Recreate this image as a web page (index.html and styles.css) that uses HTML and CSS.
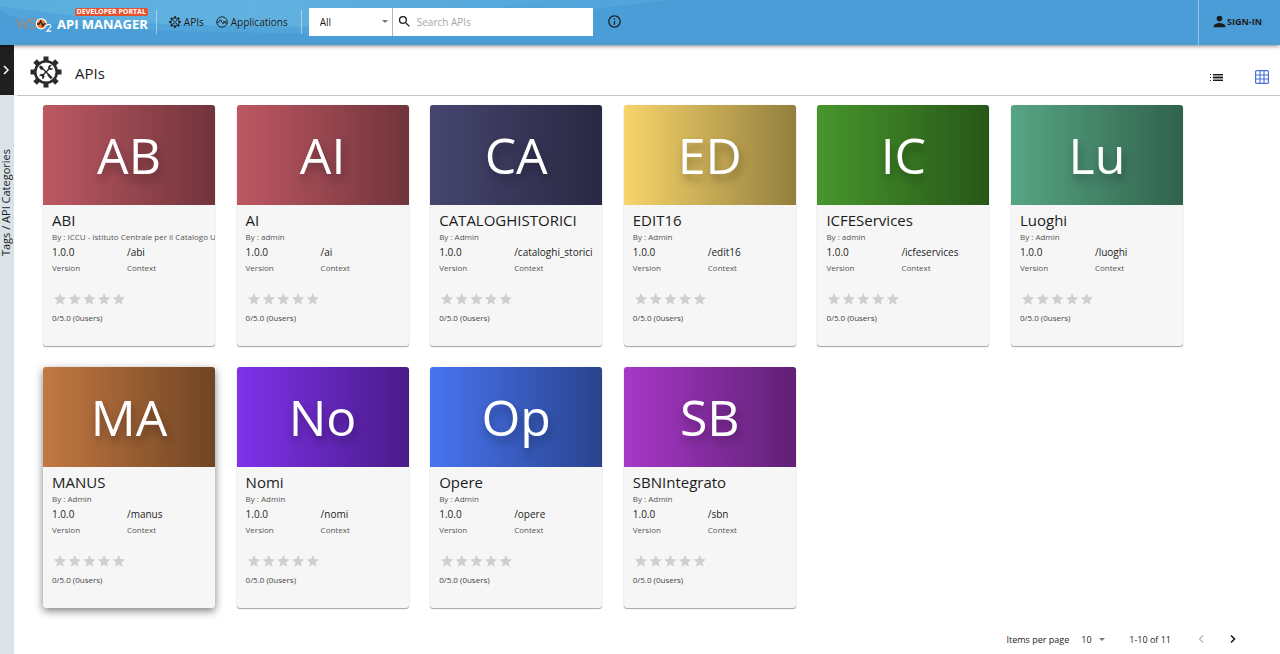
FILE: index.html
```html
<!DOCTYPE html>
<html lang="en">
<head>
<meta charset="utf-8">
<meta name="viewport" content="width=device-width, initial-scale=1">
<title>APIs - Developer Portal</title>
<link rel="stylesheet" href="styles.css">
</head>
<body>
<svg class="defs" aria-hidden="true">
  <symbol id="gear" viewBox="0 0 32 32">
    <g fill="currentColor">
      <g id="teeth">
        <rect x="13.5" y="0.5" width="5" height="5"/><rect x="13.5" y="26.5" width="5" height="5"/>
        <rect x="0.5" y="13.5" width="5" height="5"/><rect x="26.5" y="13.5" width="5" height="5"/>
      </g>
      <use href="#teeth" transform="rotate(45 16 16)"/>
    </g>
    <circle cx="16" cy="16" r="10.8" fill="none" stroke="currentColor" stroke-width="2.6"/>
    <path d="M12 12l8.300 8.300M20 12l-8 8" stroke="currentColor" stroke-width="1.400" fill="none"/>
    <path d="M10.300 9.600l2.400 1 .7 2.300-1.100 1-2.200-.8-1-2.300zM18.700 17.800l4 3.600-1.900 1.900-3.600-4z" fill="currentColor"/>
    <path d="M21.900 9.300a2.500 2.500 0 1 0 1.200 2.700l-2 .4-1.200-1.200z" fill="currentColor"/>
    <path d="M9.300 20.200a2.600 2.600 0 1 1 2.700 2.700l.2-2-1-1.100z" fill="currentColor"/>
  </symbol>
  <symbol id="stars" viewBox="0 0 73 14">
    <path id="star" fill="#cfcfcf" d="M7 1l1.800 4.100 4.300.4-3.300 2.900 1 4.300L7 10.400l-3.800 2.300 1-4.300L.9 5.500l4.300-.4z"/>
    <use href="#star" x="14.700"/><use href="#star" x="29.400"/><use href="#star" x="44.100"/><use href="#star" x="58.800"/>
  </symbol>
</svg>

<header class="topbar">
  <svg class="waves" viewBox="0 0 700 45" preserveAspectRatio="none" aria-hidden="true">
    <defs>
      <linearGradient id="sky" x1="0" x2="1" y1="0" y2="0"><stop offset="0" stop-color="#5aaddd"/><stop offset=".45" stop-color="#61b2e0"/><stop offset="1" stop-color="#55a6da"/></linearGradient>
    </defs>
    <path fill="#52a5da" d="M0 0H665Q600 8 550 14T400 30Q300 36 150 30T0 8z"/>
    <path fill="url(#sky)" d="M0 0H560Q460 12 390 20T270 26Q150 26 90 18T0 6z"/>
  </svg>
  <a class="brand" href="#" aria-label="WSO2 API Manager developer portal">
    <svg class="brand-mark" viewBox="0 0 37 18" aria-hidden="true">
      <path d="M.6 3.500l3.200 9.800L7 4.500l3.200 8.800 3.100-9.800M20.500 4.800q-2-1.400-4-.9-2.200.8-1.700 2.600.5 1.400 3 2 2.700.9 2.400 2.900-.6 2-3 1.900-1.600 0-3-1" fill="none" stroke="#a98b72" stroke-width="1.200"/>
      <circle cx="25.300" cy="8.800" r="5" fill="#ef7b32" stroke="#fff" stroke-width="1.200"/>
      <path d="M21 9h2.200l1.600-3 2 5 1.300-2.200h2" fill="none" stroke="#2a2220" stroke-width="1.300"/>
      <path d="M30.700 11q.4-1.800 2.200-1.800 2 .1 2 1.900 0 1.200-4 5h4.500" fill="none" stroke="#fff" stroke-width="1.100"/>
    </svg>
    <span class="brand-text"><span class="portal">DEVELOPER PORTAL</span><span class="product">API MANAGER</span></span>
  </a>
  <nav class="nav">
    <a href="#"><svg class="nav-icon" aria-hidden="true"><use href="#gear"/></svg>APIs</a>
    <a href="#"><svg class="nav-icon" viewBox="0 0 24 24" fill="none" stroke="currentColor" stroke-width="1.800" aria-hidden="true"><circle cx="12" cy="12" r="10.500"/><path d="M1.500 13h2.800q1.500 0 2.300-2.600Q8 6 9.400 8l4.100 7q1.200 1.500 2-.7l1-2q.9-1.200 1.500.7t2 1h2.500M14 11.500l6 0"/></svg>Applications</a>
  </nav>
  <form class="search">
    <select class="scope" aria-label="Search scope"><option>All</option></select>
    <label class="search-box">
      <svg class="search-icon" viewBox="0 0 24 24" aria-hidden="true"><path fill="currentColor" d="M15.500 14h-.79l-.28-.27A6.471 6.471 0 0 0 16 9.500 6.500 6.500 0 1 0 9.500 16c1.610 0 3.090-.59 4.230-1.570l.27.280v.79l5 4.990L20.490 19l-4.990-5zm-6 0C7.010 14 5 11.990 5 9.500S7.010 5 9.500 5 14 7.010 14 9.500 11.990 14 9.500 14z"/></svg>
      <input type="search" placeholder="Search APIs" aria-label="Search APIs">
    </label>
  </form>
  <button class="icon-button" type="button" aria-label="Search help"><svg class="info" viewBox="0 0 24 24" aria-hidden="true"><path fill="currentColor" d="M11 17h2v-6h-2v6zm1-15C6.480 2 2 6.480 2 12s4.480 10 10 10 10-4.480 10-10S17.520 2 12 2zm0 18c-4.410 0-8-3.590-8-8s3.590-8 8-8 8 3.590 8 8-3.590 8-8 8zM11 9h2V7h-2v2z"/></svg></button>
  <a class="sign-in" href="#"><svg class="person" viewBox="3 3 18 18" aria-hidden="true"><path fill="currentColor" d="M12 12c2.210 0 4-1.790 4-4s-1.790-4-4-4-4 1.790-4 4 1.790 4 4 4zm0 2c-2.670 0-8 1.340-8 4v2h16v-2c0-2.660-5.330-4-8-4z"/></svg>SIGN-IN</a>
</header>

<div class="layout">
  <aside class="rail">
    <button class="rail-toggle" type="button" aria-label="Expand tags"><svg class="chevron" viewBox="0 0 8 12" aria-hidden="true"><path d="M2 2l4 4-4 4" fill="none" stroke="currentColor" stroke-width="1.500"/></svg></button>
    <span class="rail-label">Tags / API Categories</span>
  </aside>
  <main class="content">
    <div class="heading">
      <svg class="heading-icon" aria-hidden="true"><use href="#gear"/></svg>
      <h1>APIs</h1>
      <div class="views">
        <button class="icon-button" type="button" aria-label="List view"><svg class="list-icon" viewBox="0 0 13 9" aria-hidden="true"><path fill="#999" d="M3 1h10v7H3z"/><path fill="currentColor" d="M0 1h1v1H0zM0 4h1v1H0zM0 7h1v1H0zM3 1h10v1H3zM3 4h10v1H3zM3 7h10v1H3z"/></svg></button>
        <button class="icon-button active" type="button" aria-label="Grid view"><svg class="grid-icon" viewBox="0 0 14 14" fill="none" stroke="currentColor" stroke-width="1.200" aria-hidden="true"><rect x=".6" y=".6" width="12.800" height="12.800" rx="1"/><path d="M5 .6v12.800M9 .6v12.800M.6 5h12.800M.6 9h12.800"/></svg></button>
      </div>
    </div>

    <div class="cards">
      <article class="card"><a class="thumb rose" href="#">AB</a><div class="body"><h2>ABI</h2><p class="by">By : ICCU - Istituto Centrale per il Catalogo Unico</p><dl><div><dd>1.0.0</dd><dt>Version</dt></div><div><dd>/abi</dd><dt>Context</dt></div></dl><svg class="stars" aria-hidden="true"><use href="#stars"/></svg><p class="score">0/5.0 (0users)</p></div></article>
      <article class="card"><a class="thumb rose" href="#">AI</a><div class="body"><h2>AI</h2><p class="by">By : admin</p><dl><div><dd>1.0.0</dd><dt>Version</dt></div><div><dd>/ai</dd><dt>Context</dt></div></dl><svg class="stars" aria-hidden="true"><use href="#stars"/></svg><p class="score">0/5.0 (0users)</p></div></article>
      <article class="card"><a class="thumb navy" href="#">CA</a><div class="body"><h2>CATALOGHISTORICI</h2><p class="by">By : Admin</p><dl><div><dd>1.0.0</dd><dt>Version</dt></div><div><dd>/cataloghi_storici</dd><dt>Context</dt></div></dl><svg class="stars" aria-hidden="true"><use href="#stars"/></svg><p class="score">0/5.0 (0users)</p></div></article>
      <article class="card"><a class="thumb gold" href="#">ED</a><div class="body"><h2>EDIT16</h2><p class="by">By : Admin</p><dl><div><dd>1.0.0</dd><dt>Version</dt></div><div><dd>/edit16</dd><dt>Context</dt></div></dl><svg class="stars" aria-hidden="true"><use href="#stars"/></svg><p class="score">0/5.0 (0users)</p></div></article>
      <article class="card"><a class="thumb green" href="#">IC</a><div class="body"><h2>ICFEServices</h2><p class="by">By : admin</p><dl><div><dd>1.0.0</dd><dt>Version</dt></div><div><dd>/icfeservices</dd><dt>Context</dt></div></dl><svg class="stars" aria-hidden="true"><use href="#stars"/></svg><p class="score">0/5.0 (0users)</p></div></article>
      <article class="card"><a class="thumb teal" href="#">Lu</a><div class="body"><h2>Luoghi</h2><p class="by">By : Admin</p><dl><div><dd>1.0.0</dd><dt>Version</dt></div><div><dd>/luoghi</dd><dt>Context</dt></div></dl><svg class="stars" aria-hidden="true"><use href="#stars"/></svg><p class="score">0/5.0 (0users)</p></div></article>
      <article class="card raised"><a class="thumb copper" href="#">MA</a><div class="body"><h2>MANUS</h2><p class="by">By : Admin</p><dl><div><dd>1.0.0</dd><dt>Version</dt></div><div><dd>/manus</dd><dt>Context</dt></div></dl><svg class="stars" aria-hidden="true"><use href="#stars"/></svg><p class="score">0/5.0 (0users)</p></div></article>
      <article class="card"><a class="thumb violet" href="#">No</a><div class="body"><h2>Nomi</h2><p class="by">By : Admin</p><dl><div><dd>1.0.0</dd><dt>Version</dt></div><div><dd>/nomi</dd><dt>Context</dt></div></dl><svg class="stars" aria-hidden="true"><use href="#stars"/></svg><p class="score">0/5.0 (0users)</p></div></article>
      <article class="card"><a class="thumb blue" href="#">Op</a><div class="body"><h2>Opere</h2><p class="by">By : Admin</p><dl><div><dd>1.0.0</dd><dt>Version</dt></div><div><dd>/opere</dd><dt>Context</dt></div></dl><svg class="stars" aria-hidden="true"><use href="#stars"/></svg><p class="score">0/5.0 (0users)</p></div></article>
      <article class="card"><a class="thumb purple" href="#">SB</a><div class="body"><h2>SBNIntegrato</h2><p class="by">By : Admin</p><dl><div><dd>1.0.0</dd><dt>Version</dt></div><div><dd>/sbn</dd><dt>Context</dt></div></dl><svg class="stars" aria-hidden="true"><use href="#stars"/></svg><p class="score">0/5.0 (0users)</p></div></article>
    </div>

    <footer class="pager">
      <label for="per-page">Items per page</label>
      <select id="per-page" class="per-page"><option>10</option></select>
      <span class="range">1-10 of 11</span>
      <button class="icon-button" type="button" aria-label="Previous page" disabled><svg class="chevron" viewBox="0 0 8 12" aria-hidden="true"><path d="M6 2.500L2.500 6 6 9.500" fill="none" stroke="currentColor" stroke-width="1.200"/></svg></button>
      <button class="icon-button next" type="button" aria-label="Next page"><svg class="chevron" viewBox="0 0 8 12" aria-hidden="true"><path d="M2 2.500L5.500 6 2 9.500" fill="none" stroke="currentColor" stroke-width="1.600"/></svg></button>
    </footer>
  </main>
</div>
</body>
</html>
```
FILE: styles.css
```css
* { box-sizing: border-box; }

body {
  margin: 0;
  min-height: 100vh;
  display: flex;
  flex-direction: column;
  background: #fff;
  color: #1c1c1c;
  font-family: "Open Sans", sans-serif;
  font-size: 10px;
}

a { color: inherit; text-decoration: none; }
h1, h2, p, dl, dd { margin: 0; font-weight: 400; }
button, input, select { font: inherit; color: inherit; border: 0; padding: 0; background: none; }
svg { display: block; flex: none; }
.defs { position: absolute; width: 0; height: 0; }

/* Top bar */
.topbar {
  position: relative;
  z-index: 1;
  display: flex;
  align-items: center;
  height: 45px;
  padding: 0 0 2px 16px;
  background: #4a9dd6;
  box-shadow: 0 1px 4px rgba(0, 0, 0, .5);
}
.waves { position: absolute; inset: 0 auto 0 0; width: 55%; height: 100%; z-index: -1; }
.brand { display: flex; align-self: flex-start; align-items: flex-start; gap: 4px; margin-top: 8px; }
.brand-mark { width: 37px; height: 18px; margin-top: 7px; }
.brand-text { display: flex; flex-direction: column; align-items: flex-end; color: #fff; font-weight: 700; }
.portal { padding: 0 2px; border-radius: 2px; background: #e5502d; font-size: 7px; line-height: 8px; }
.product { font-size: 13px; line-height: 16px; }
.nav {
  display: flex;
  align-items: center;
  gap: 12px;
  height: 24px;
  margin-left: 8px;
  padding: 0 13px 0 12px;
  border: solid rgba(255, 255, 255, .45);
  border-width: 0 1px;
}
.nav a { display: flex; align-items: center; gap: 3px; font-size: 10px; }
.nav-icon { width: 12px; height: 12px; }
.search { display: flex; flex: 0 1 284px; height: 28px; margin-left: 7px; background: #fff; }
select {
  appearance: none;
  border-radius: 0;
  background: url("data:image/svg+xml,%3Csvg xmlns='http://www.w3.org/2000/svg' width='6' height='3'%3E%3Cpath fill='%23777' d='M0 0h6L3 3z'/%3E%3C/svg%3E") no-repeat right center;
}
.scope { width: 84px; padding-left: 11px; border-right: 1px solid #b5b5b5; background-position: right 4px center; }
.search-box { display: flex; flex: 1; align-items: center; gap: 5px; padding-left: 4px; }
.search-icon { width: 15px; height: 15px; }
.search-box input { flex: 1; min-width: 0; outline: 0; }
.search-box input::placeholder { color: #a6a6a6; opacity: 1; }
.icon-button { display: flex; align-items: center; justify-content: center; }
.info { width: 15px; height: 15px; }
.search + .icon-button { margin-left: 14px; }
.sign-in {
  display: flex;
  align-items: center;
  align-self: stretch;
  gap: 1px;
  margin: 0 0 -2px auto;
  padding: 0 18px 2px 14px;
  border-left: 1px solid #8fc2e6;
  font-size: 9px;
  font-weight: 700;
}
.person { width: 13px; height: 13px; }

/* Side rail */
.layout { display: flex; flex: 1; }
.rail { display: flex; flex-direction: column; align-items: center; width: 14px; background: #dae3e8; }
.rail-toggle { display: flex; align-items: center; justify-content: center; width: 100%; height: 50px; padding-right: 3px; background: #1f1f1f; color: #fff; }
.chevron { width: 8px; height: 12px; }
.rail-label { margin: 54px 3px 0 0; writing-mode: vertical-rl; transform: rotate(180deg); font-size: 11px; line-height: 11px; white-space: nowrap; }

/* Content */
.content { flex: 1; min-width: 0; padding-left: 3px; }
.heading { display: flex; align-items: center; height: 51px; padding: 4px 11px 0 13px; border-bottom: 1px solid #c4c4c4; }
.heading-icon { width: 32px; height: 32px; color: #2b2b2b; }
h1 { margin-left: 13px; padding-top: 2px; font-size: 15px; line-height: 20px; }
.views { display: flex; align-items: center; gap: 32px; margin-left: auto; padding-top: 10px; }
.list-icon { width: 13px; height: 9px; }
.grid-icon { width: 14px; height: 14px; }
.active { color: #4b74d8; }

.cards {
  display: grid;
  grid-template-columns: repeat(auto-fill, 172px);
  justify-content: space-between;
  gap: 21px;
  padding: 9px 97px 0 26px;
}
.card {
  display: flex;
  flex-direction: column;
  min-height: 241px;
  overflow: hidden;
  border-radius: 3px;
  background: #f6f6f6;
  box-shadow: 0 1px 1px rgba(0, 0, 0, .35), 0 0 1px rgba(0, 0, 0, .2);
}
.raised { box-shadow: 0 3px 8px rgba(0, 0, 0, .5); }
.thumb {
  display: flex;
  align-items: center;
  justify-content: center;
  height: 100px;
  color: #fff;
  font-size: 50px;
  line-height: 68px;
  text-shadow: 2px 6px 8px rgba(0, 0, 0, .3);
}
.rose { background: linear-gradient(to right, #be5863, #70343b); }
.navy { background: linear-gradient(to right, #46456f, #292842); }
.gold { background: linear-gradient(to right, #f7d56b, #937e3e); }
.green { background: linear-gradient(to right, #47962d, #275718); }
.teal { background: linear-gradient(to right, #57a584, #30624c); }
.copper { background: linear-gradient(to right, #c37842, #704524); }
.violet { background: linear-gradient(to right, #7f32eb, #491b88); }
.blue { background: linear-gradient(to right, #4874f0, #29438e); }
.purple { background: linear-gradient(to right, #a738c8, #602074); }

.body { padding: 5px 0 0 9px; }
h2 { font-size: 15px; line-height: 20px; }
.by { overflow: hidden; color: #555; font-size: 8px; line-height: 13px; white-space: nowrap; }
dl { display: flex; }
dl div { width: 75px; }
dd { font-size: 10px; line-height: 18px; white-space: nowrap; }
dt { color: #555; font-size: 8px; line-height: 14px; }
.stars { width: 73px; height: 14px; margin: 17px 0 6px 1px; }
.score { color: #444; font-size: 8px; line-height: 12px; }

/* Pager */
.pager { display: flex; align-items: center; justify-content: flex-end; height: 24px; margin-top: 19px; padding-right: 43px; font-size: 9px; }
.per-page { width: 24px; margin: 0 24px 0 12px; }
.range { margin-right: 26px; }
.icon-button:disabled { color: #b5b5b5; }
.next { margin-left: 24px; }
```
